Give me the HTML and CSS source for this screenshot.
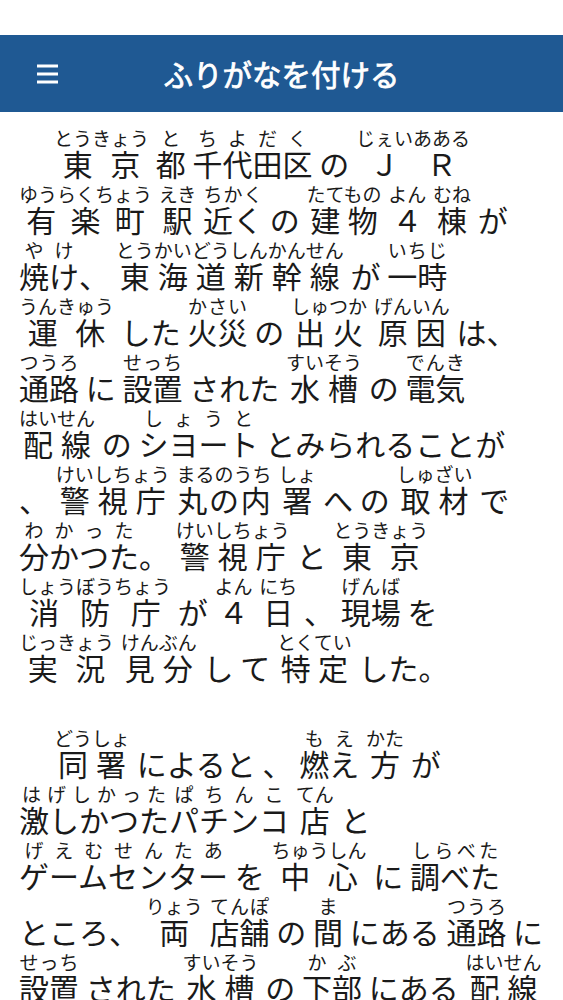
FILE: index.html
```html
<!DOCTYPE html>
<html lang="ja">
<head>
<meta charset="utf-8">
<title>ふりがなを付ける</title>
<link rel="stylesheet" href="styles.css">
</head>
<body>
<div class="statusbar"></div>
<header class="appbar">
  <span class="menu" aria-label="メニュー">
    <svg width="21" height="20" viewBox="0 0 21 20"><rect x="0" y="0.5" width="21" height="3" fill="#fff"/><rect x="0" y="8.5" width="21" height="3" fill="#fff"/><rect x="0" y="16.5" width="21" height="3" fill="#fff"/></svg>
  </span>
  <h1 class="title">ふりがなを付ける</h1>
  <span class="spacer"></span>
</header>
<main class="content">
<p class="para"><span class="w"><ruby>東京<rt>とうきょう</rt></ruby></span> <span class="w"><ruby>都<rt>と</rt></ruby></span> <span class="w"><ruby>千代田区<rt>ちよだく</rt></ruby></span> の <span class="w"><ruby>ＪＲ<rt>じぇいあある</rt></ruby></span><br>
<span class="w"><ruby>有楽町<rt>ゆうらくちょう</rt></ruby></span> <span class="w"><ruby>駅<rt>えき</rt></ruby></span> <span class="w"><ruby>近く<rt>ちかく</rt></ruby></span> の <span class="w"><ruby>建物<rt>たてもの</rt></ruby></span> <span class="w"><ruby>４<rt>よん</rt></ruby></span> <span class="w"><ruby>棟<rt>むね</rt></ruby></span> が<br>
<span class="w"><ruby>焼け<rt>やけ</rt></ruby></span>、 <span class="w"><ruby>東海道新幹線<rt>とうかいどうしんかんせん</rt></ruby></span> が <span class="w"><ruby>一時<rt>いちじ</rt></ruby></span><br>
<span class="w"><ruby>運休<rt>うんきゅう</rt></ruby></span> した <span class="w"><ruby>火災<rt>かさい</rt></ruby></span> の <span class="w"><ruby>出火<rt>しゅつか</rt></ruby></span> <span class="w"><ruby>原因<rt>げんいん</rt></ruby></span> は、<br>
<span class="w"><ruby>通路<rt>つうろ</rt></ruby></span> に <span class="w"><ruby>設置<rt>せっち</rt></ruby></span> された <span class="w"><ruby>水槽<rt>すいそう</rt></ruby></span> の <span class="w"><ruby>電気<rt>でんき</rt></ruby></span><br>
<span class="w"><ruby>配線<rt>はいせん</rt></ruby></span> の <span class="w"><ruby>シヨート<rt>しょうと</rt></ruby></span> とみられることが<br>
、 <span class="w"><ruby>警視庁<rt>けいしちょう</rt></ruby></span> <span class="w"><ruby>丸の内<rt>まるのうち</rt></ruby></span> <span class="w"><ruby>署<rt>しょ</rt></ruby></span> へ の <span class="w"><ruby>取材<rt>しゅざい</rt></ruby></span> で<br>
<span class="w"><ruby>分かつた<rt>わかった</rt></ruby></span>。 <span class="w"><ruby>警視庁<rt>けいしちょう</rt></ruby></span> と <span class="w"><ruby>東京<rt>とうきょう</rt></ruby></span><br>
<span class="w"><ruby>消防庁<rt>しょうぼうちょう</rt></ruby></span> が <span class="w"><ruby>４<rt>よん</rt></ruby></span> <span class="w"><ruby>日<rt>にち</rt></ruby></span> 、 <span class="w"><ruby>現場<rt>げんば</rt></ruby></span> を<br>
<span class="w"><ruby>実況<rt>じっきょう</rt></ruby></span> <span class="w"><ruby>見分<rt>けんぶん</rt></ruby></span> し て <span class="w"><ruby>特定<rt>とくてい</rt></ruby></span> した。</p>
<p class="para"><span class="w"><ruby>同署<rt>どうしょ</rt></ruby></span> によると 、 <span class="w"><ruby>燃え<rt>もえ</rt></ruby></span> <span class="w"><ruby>方<rt>かた</rt></ruby></span> が<br>
<span class="w"><ruby>激しかつた<rt>はげしかった</rt></ruby></span><span class="w"><ruby>パチンコ<rt>ぱちんこ</rt></ruby></span> <span class="w"><ruby>店<rt>てん</rt></ruby></span> と<br>
<span class="w"><ruby>ゲームセンター<rt>げえむせんたあ</rt></ruby></span> を <span class="w"><ruby>中心<rt>ちゅうしん</rt></ruby></span> に <span class="w"><ruby>調べた<rt>しらべた</rt></ruby></span><br>
ところ、 <span class="w"><ruby>両<rt>りょう</rt></ruby></span> <span class="w"><ruby>店舗<rt>てんぽ</rt></ruby></span> の <span class="w"><ruby>間<rt>ま</rt></ruby></span> にある <span class="w"><ruby>通路<rt>つうろ</rt></ruby></span> に<br>
<span class="w"><ruby>設置<rt>せっち</rt></ruby></span> された <span class="w"><ruby>水槽<rt>すいそう</rt></ruby></span> の <span class="w"><ruby>下部<rt>かぶ</rt></ruby></span> にある <span class="w"><ruby>配線<rt>はいせん</rt></ruby></span></p>
</main>
</body>
</html>
```

FILE: styles.css
```css
html, body {
  margin: 0;
  padding: 0;
  background: #ffffff;
}
body {
  font-family: "Noto Sans CJK JP", "Noto Sans", sans-serif;
  color: #1a1a1a;
  height: 1000px;
  overflow: hidden;
}
.statusbar {
  height: 35px;
  background: #ffffff;
}
.appbar {
  height: 77px;
  background: #1f5993;
  display: grid;
  grid-template-columns: 80px 1fr 80px;
  align-items: center;
  color: #ffffff;
}
.menu {
  justify-self: start;
  margin-left: 37px;
  display: flex;
}
.title {
  margin: 0;
  justify-self: center;
  font-size: 29.5px;
  font-weight: 400;
  -webkit-text-stroke: 0.8px #ffffff;
  line-height: 1;
}
.content {
  padding: 17px 19px 0 19px;
  font-size: 30px;
  line-height: 44px;
}
.para {
  margin: 0;
  white-space: nowrap;
  text-indent: 35px;
  word-spacing: 0;
}
.para + .para {
  margin-top: 40px;
}
.w {
  display: inline-block;
  text-indent: 0;
  line-height: 28px;
}
rt {
  font-size: 19px;
  line-height: 28px;
  text-indent: 0;
}
```
